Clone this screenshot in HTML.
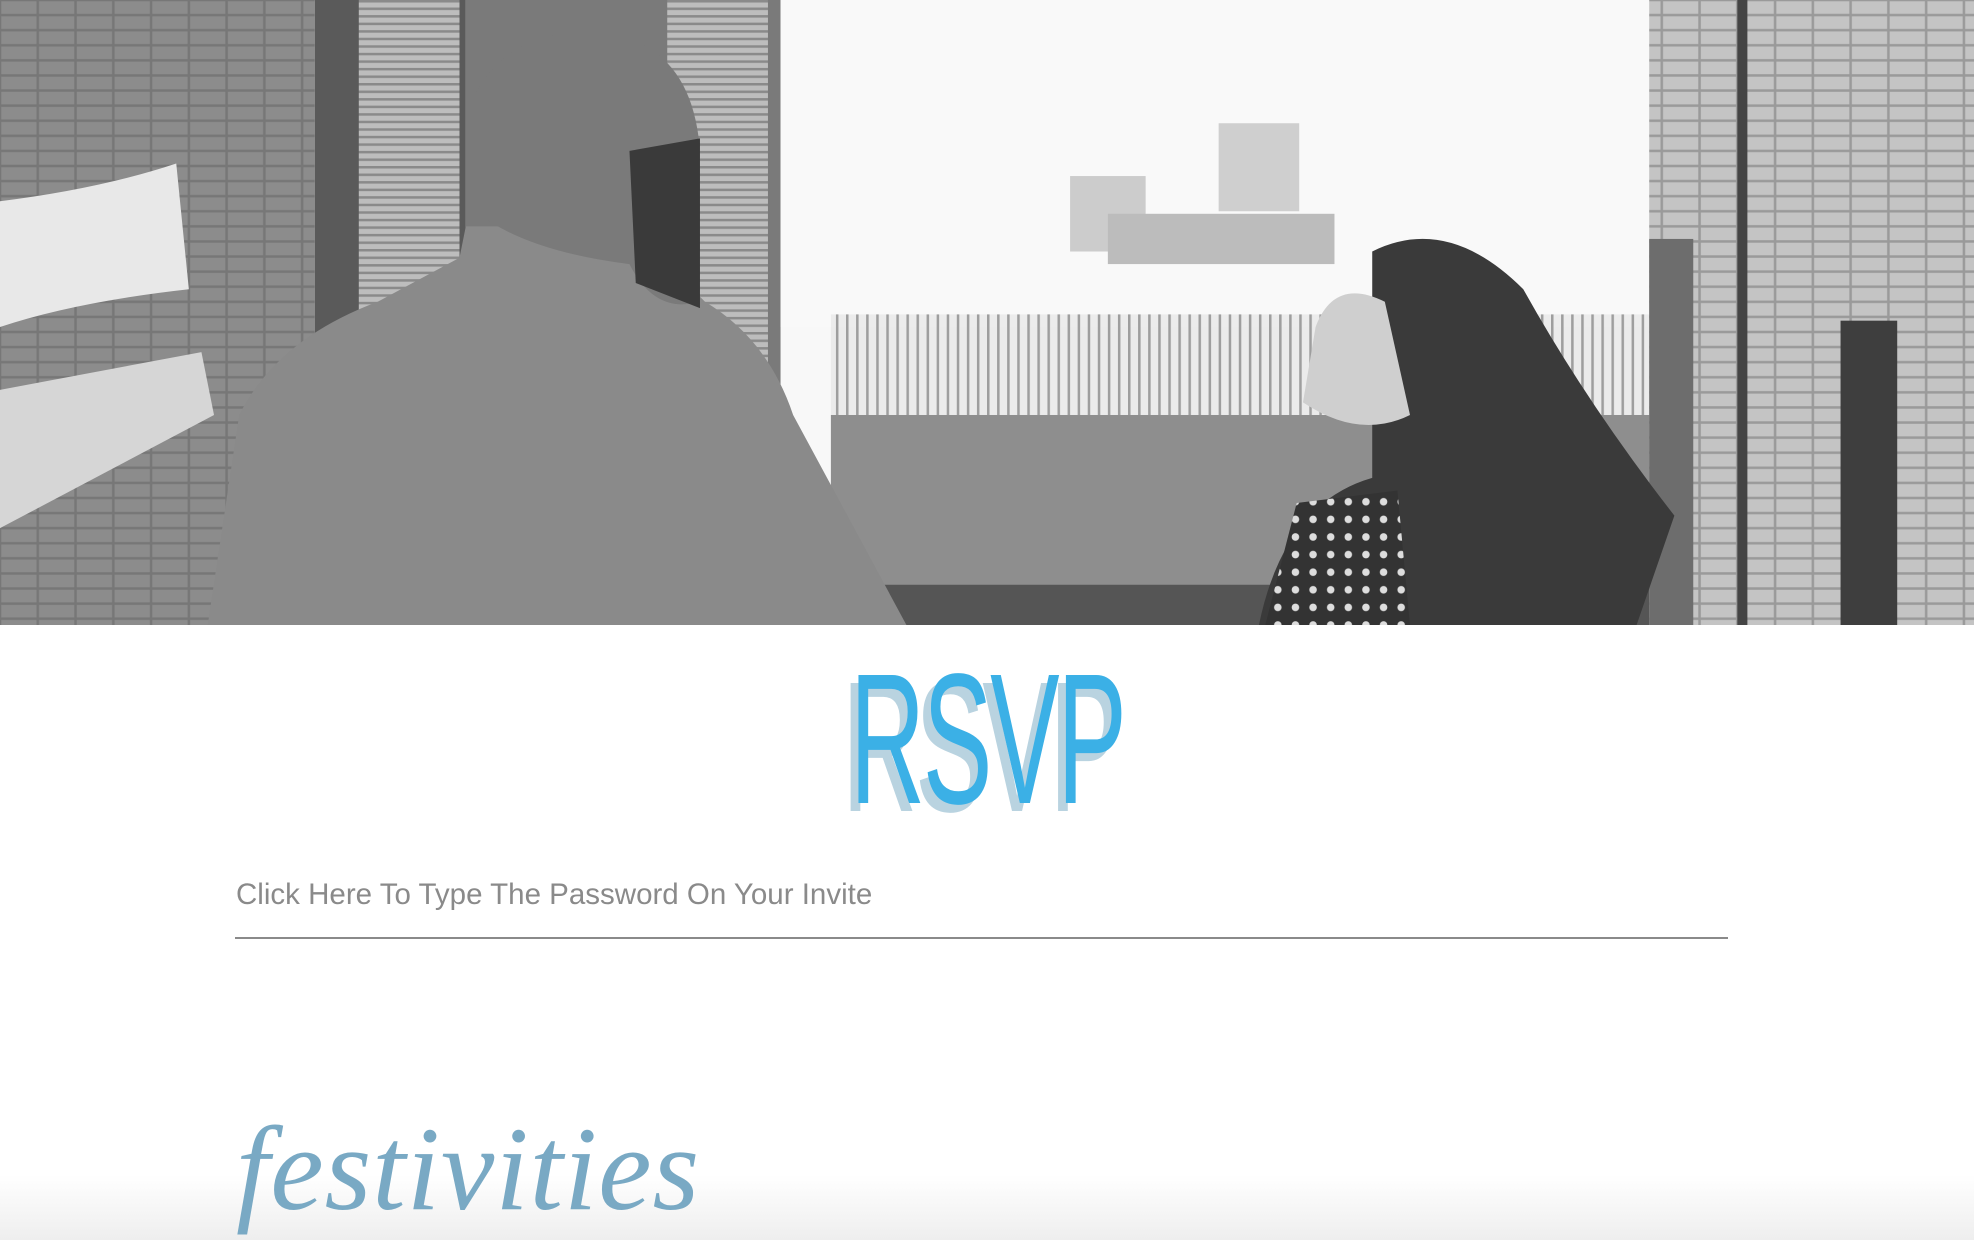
<!DOCTYPE html>
<html><head><meta charset="utf-8"><style>
html,body{margin:0;padding:0;background:#fff;width:1974px;height:1240px;overflow:hidden;position:relative;font-family:"Liberation Sans",sans-serif}
#photo{position:absolute;left:0;top:0;width:1974px;height:625px}
.rsvp{position:absolute;top:640px;left:0;width:1974px;text-align:center;font-family:"Liberation Sans Narrow","Liberation Sans",sans-serif;font-size:186px;letter-spacing:-4px;line-height:200px}
.rsvp span{display:inline-block;transform:scaleX(0.56);}
.pw{position:absolute;left:236px;top:878px;font-size:29.5px;color:#8a8a8a}
.line{position:absolute;left:235px;top:937px;width:1493px;height:2px;background:#8a8a8a}
.fest{position:absolute;left:236px;top:1100px;font-family:"Liberation Serif",serif;font-style:italic;font-size:120px;color:#79a9c4;letter-spacing:1px}
.fade{position:absolute;left:0;top:1175px;width:1974px;height:65px;background:linear-gradient(#fff,#eeeeee)}
</style></head><body>
<svg id="photo" viewBox="0 0 1568 497" preserveAspectRatio="none">
<defs>
<pattern id="brick" width="30" height="12" patternUnits="userSpaceOnUse"><rect width="30" height="12" fill="#777"/><rect x="1" y="1" width="28" height="10" fill="#8c8c8c"/></pattern>
<pattern id="brick2" width="30" height="12" patternUnits="userSpaceOnUse"><rect width="30" height="12" fill="#9a9a9a"/><rect x="1" y="1" width="28" height="10" fill="#c4c4c4"/></pattern>
<pattern id="shut" width="10" height="6" patternUnits="userSpaceOnUse"><rect width="10" height="6" fill="#bdbdbd"/><rect width="10" height="2" fill="#8a8a8a"/></pattern>
<pattern id="net" width="8" height="8" patternUnits="userSpaceOnUse"><rect width="8" height="8" fill="#e6e6e6"/><rect width="2" height="8" fill="#777"/></pattern>
<pattern id="dots" width="14" height="14" patternUnits="userSpaceOnUse"><rect width="14" height="14" fill="#333"/><circle cx="7" cy="7" r="3" fill="#ddd"/></pattern>
</defs>
<rect width="1568" height="497" fill="#f8f8f8"/>
<rect x="0" y="0" width="250" height="497" fill="url(#brick)"/>
<path d="M0 160 Q80 150 140 130 L150 230 Q60 240 0 260Z" fill="#e8e8e8"/>
<path d="M0 310 L160 280 L170 330 L0 420Z" fill="#d6d6d6"/>
<rect x="250" y="0" width="120" height="497" fill="#5a5a5a"/>
<rect x="285" y="0" width="80" height="260" fill="url(#shut)"/>
<rect x="370" y="0" width="250" height="497" fill="#7a7a7a"/>
<rect x="530" y="0" width="80" height="300" fill="url(#shut)"/>
<rect x="620" y="0" width="700" height="260" fill="#f9f9f9"/>
<rect x="850" y="140" width="60" height="60" fill="#ccc"/>
<rect x="968" y="98" width="64" height="70" fill="#cfcfcf"/>
<rect x="880" y="170" width="180" height="40" fill="#bcbcbc"/>
<rect x="660" y="250" width="660" height="90" fill="url(#net)" opacity="0.7"/>
<rect x="660" y="330" width="660" height="140" fill="#8e8e8e"/>
<rect x="700" y="465" width="620" height="32" fill="#555"/>
<rect x="1310" y="0" width="258" height="497" fill="url(#brick2)"/>
<rect x="1310" y="190" width="35" height="307" fill="#6d6d6d"/>
<rect x="1462" y="255" width="45" height="242" fill="#3e3e3e"/>
<rect x="1380" y="0" width="8" height="497" fill="#444"/>
<path d="M165 497 L190 330 Q220 270 300 240 L365 205 L370 180 L500 180 L560 240 Q610 270 630 330 L720 497Z" fill="#8a8a8a"/>
<path d="M375 80 Q400 25 470 25 Q545 30 555 110 L555 240 Q520 250 500 210 Q420 200 380 170Z" fill="#7a7a7a"/>
<path d="M500 120 L556 110 L556 245 L505 225Z" fill="#3a3a3a"/>
<path d="M1090 200 Q1150 170 1210 230 Q1260 320 1330 410 L1300 497 L1000 497 Q1020 400 1090 380Z" fill="#3a3a3a"/>
<path d="M1045 260 Q1060 220 1100 240 L1120 330 Q1080 350 1035 320Z" fill="#cfcfcf"/>
<path d="M1005 497 L1030 400 L1110 390 L1120 497Z" fill="url(#dots)"/>
</svg>
<div class="rsvp"><span><b style="color:#b9d3e0;position:absolute;margin-left:-14px;margin-top:8px;font-weight:normal">RSVP</b><b style="position:relative;color:#3bb0e6;font-weight:normal">RSVP</b></span></div>
<div class="fade"></div>
<div class="pw">Click Here To Type The Password On Your Invite</div>
<div class="line"></div>
<div class="fest">festivities</div>
</body></html>
